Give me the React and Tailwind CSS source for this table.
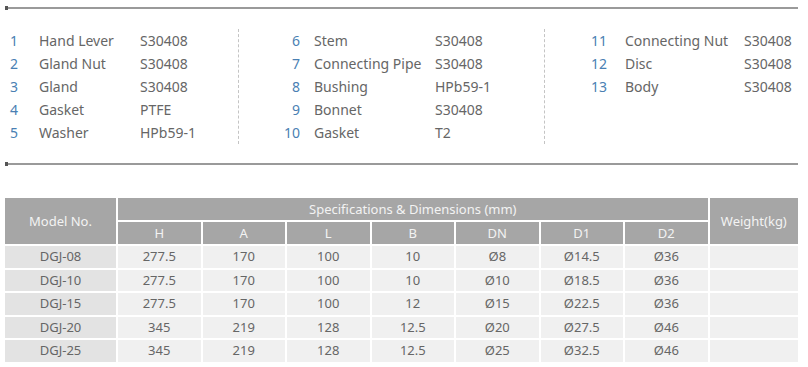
import React from 'react';

const parts = [
  [
    ['1', 'Hand Lever', 'S30408'],
    ['2', 'Gland Nut', 'S30408'],
    ['3', 'Gland', 'S30408'],
    ['4', 'Gasket', 'PTFE'],
    ['5', 'Washer', 'HPb59-1'],
  ],
  [
    ['6', 'Stem', 'S30408'],
    ['7', 'Connecting Pipe', 'S30408'],
    ['8', 'Bushing', 'HPb59-1'],
    ['9', 'Bonnet', 'S30408'],
    ['10', 'Gasket', 'T2'],
  ],
  [
    ['11', 'Connecting Nut', 'S30408'],
    ['12', 'Disc', 'S30408'],
    ['13', 'Body', 'S30408'],
  ],
];

// column geometry: [column width, number box width, gap before name, name width]
const layout = [
  ['w-[234px]', 'w-[13px]', 'ml-[21px]', 'w-[101px]'],
  ['w-[306px]', 'w-[61px]', 'ml-[14px]', 'w-[121px]'],
  ['flex-1', 'w-[62px]', 'ml-[18px]', 'w-[119px]'],
];

const dims = ['H', 'A', 'L', 'B', 'DN', 'D1', 'D2'];

const rows = [
  ['DGJ-08', '277.5', '170', '100', '10', 'Ø8', 'Ø14.5', 'Ø36'],
  ['DGJ-10', '277.5', '170', '100', '10', 'Ø10', 'Ø18.5', 'Ø36'],
  ['DGJ-15', '277.5', '170', '100', '12', 'Ø15', 'Ø22.5', 'Ø36'],
  ['DGJ-20', '345', '219', '128', '12.5', 'Ø20', 'Ø27.5', 'Ø46'],
  ['DGJ-25', '345', '219', '128', '12.5', 'Ø25', 'Ø32.5', 'Ø46'],
];

function Rule() {
  return (
    <div className="flex items-center">
      <div className="h-[4px] w-[3px] bg-[#555]" />
      <div className="h-[2px] flex-1 bg-[#9a9a9a]" />
    </div>
  );
}

function PartColumn({ items, geo, last }) {
  const [colW, numW, gap, nameW] = geo;
  return (
    <div className={`${colW} flex flex-col ${last ? '' : 'border-r border-dashed border-[#c4c4c4]'}`}>
      {items.map(([n, name, mat]) => (
        <div key={n} className="flex h-[23px] items-center whitespace-nowrap">
          <span className={`${numW} text-right text-[#4a7fb3]`}>{n}</span>
          <span className={`${gap} ${nameW} text-[#666]`}>{name}</span>
          <span className="text-[#666]">{mat}</span>
        </div>
      ))}
    </div>
  );
}

export default function App() {
  return (
    <div className="h-[367px] w-[808px] overflow-hidden bg-white px-[5px] pt-[6px] font-['Noto_Sans',sans-serif]">
      <div className="w-[793px]">
        <Rule />
      </div>

      <div className="mt-[19px] flex h-[115px] w-[793px] text-[14px] leading-none">
        {parts.map((items, i) => (
          <PartColumn key={i} items={items} geo={layout[i]} last={i === 2} />
        ))}
      </div>

      <div className="mt-[18px] w-[793px]">
        <Rule />
      </div>

      <div className="mt-[32px] grid w-[793px] grid-cols-[113fr_repeat(7,84fr)_90fr] grid-rows-[22px_22px_repeat(5,21.5px)] gap-[2px] bg-white text-[13px] leading-none">
        <div className="row-span-2 flex items-center justify-center bg-[#a6a6a6] text-[#f3f3f3]">Model No.</div>
        <div className="col-span-7 flex items-center justify-center bg-[#a6a6a6] text-[#f3f3f3]">
          Specifications &amp; Dimensions (mm)
        </div>
        <div className="row-span-2 flex items-center justify-center bg-[#a6a6a6] text-[#f3f3f3]">Weight(kg)</div>
        {dims.map((d) => (
          <div key={d} className="flex items-center justify-center bg-[#a6a6a6] text-[#f3f3f3]">
            {d}
          </div>
        ))}
        {rows.map((r) => (
          <React.Fragment key={r[0]}>
            {r.map((v, j) => (
              <div
                key={j}
                className={`flex items-center justify-center text-[#666] ${j === 0 ? 'bg-[#e3e3e3]' : 'bg-[#f0f0f0]'}`}
              >
                {v}
              </div>
            ))}
            <div className="bg-[#f0f0f0]" />
          </React.Fragment>
        ))}
      </div>
    </div>
  );
}
